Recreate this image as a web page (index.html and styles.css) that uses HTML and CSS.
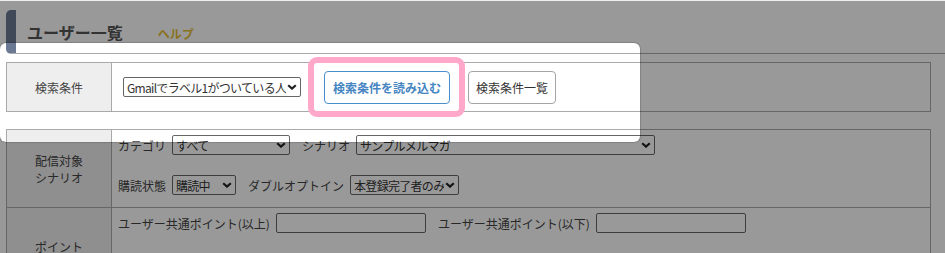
FILE: index.html
```html
<!DOCTYPE html>
<html lang="ja">
<head>
  <meta charset="utf-8"/>
  <title>ユーザー一覧</title>
  <link rel="stylesheet" href="styles.css">
</head>
<body>
  <div class="page">

    <div class="page-head">
      <h1 class="page-title">ユーザー一覧</h1>
      <a class="help-link" href="#">ヘルプ</a>
    </div>

    <!-- search condition -->
    <table class="form-table search-table">
      <tr>
        <th>検索条件</th>
        <td>
          <div class="line">
            <span class="sel">
              <select class="w-cond">
                <option>Gmailでラベル1がついている人</option>
              </select>
              <svg class="chev" viewBox="0 0 10 6" width="10" height="6"><path d="M1.2 1.2 5 4.6 8.8 1.2" fill="none" stroke="currentColor" stroke-width="2.2"/></svg>
            </span>
            <button class="btn btn-load">検索条件を読み込む</button>
            <button class="btn btn-list">検索条件一覧</button>
          </div>
        </td>
      </tr>
    </table>

    <table class="form-table filter-table">
      <tr class="row-scenario">
        <th>配信対象<br>シナリオ</th>
        <td>
          <div class="line">
            <span class="lbl">カテゴリ</span>
            <span class="sel">
              <select class="w-cat"><option>すべて</option></select>
              <svg class="chev" viewBox="0 0 10 6" width="10" height="6"><path d="M1.2 1.2 5 4.6 8.8 1.2" fill="none" stroke="currentColor" stroke-width="2.2"/></svg>
            </span>
            <span class="lbl gap-l">シナリオ</span>
            <span class="sel">
              <select class="w-scn"><option>サンプルメルマガ</option></select>
              <svg class="chev" viewBox="0 0 10 6" width="10" height="6"><path d="M1.2 1.2 5 4.6 8.8 1.2" fill="none" stroke="currentColor" stroke-width="2.2"/></svg>
            </span>
          </div>
          <div class="line">
            <span class="lbl">購読状態</span>
            <span class="sel">
              <select class="w-sub"><option>購読中</option></select>
              <svg class="chev" viewBox="0 0 10 6" width="10" height="6"><path d="M1.2 1.2 5 4.6 8.8 1.2" fill="none" stroke="currentColor" stroke-width="2.2"/></svg>
            </span>
            <span class="lbl gap-l">ダブルオプトイン</span>
            <span class="sel">
              <select class="w-opt"><option>本登録完了者のみ</option></select>
              <svg class="chev" viewBox="0 0 10 6" width="10" height="6"><path d="M1.2 1.2 5 4.6 8.8 1.2" fill="none" stroke="currentColor" stroke-width="2.2"/></svg>
            </span>
          </div>
        </td>
      </tr>
      <tr class="row-point">
        <th>ポイント</th>
        <td>
          <div class="line">
            <span class="lbl">ユーザー共通ポイント(以上)</span>
            <input type="text" class="txt">
            <span class="lbl gap-l">ユーザー共通ポイント(以下)</span>
            <input type="text" class="txt">
          </div>
        </td>
      </tr>
    </table>
  </div>

  <!-- tutorial highlight -->
  <div class="spotlight"></div>
  <div class="focus-ring"></div>
</body>
</html>
```

FILE: styles.css
```css
body {
  margin: 0;
  font-family: "Noto Sans CJK JP", "Liberation Sans", sans-serif;
  font-size: 12px;
  color: #444;
  background-color: #fff;
  position: relative;
  overflow: hidden;
  border-top: 1px solid #eee;
}

.page {
  padding: 9px 0 0 6px;
}

.page-head {
  display: flex;
  align-items: center;
  height: 43px;
  border-left: 10px solid #6b7a92;
  border-bottom: 1px solid #aaa;
  border-radius: 5px 0 0 5px;
  padding-left: 11px;
}

.page-title {
  margin: 0;
  font-size: 16px;
  font-weight: 700;
  color: #555;
  line-height: 1;
}

.help-link {
  margin: 3px 0 0 35px;
  font-size: 12px;
  font-weight: 700;
  color: #e6be36;
  text-decoration: none;
}

.form-table {
  width: 925px;
  border-collapse: collapse;
  border: 1px solid #aaa;
}

.form-table th,
.form-table td {
  border: 1px solid #aaa;
  padding: 0;
}

.form-table th {
  width: 104px;
  background-color: #eee;
  font-weight: 400;
  line-height: 17px;
  text-align: center;
}

.search-table {
  margin-top: 8px;
}

.search-table td {
  height: 48px;
  padding: 0 11px;
}

.filter-table {
  margin-top: 17px;
}

.row-scenario td {
  padding: 5px 6px 12px;
  vertical-align: top;
}

.row-scenario .line + .line {
  margin-top: 20px;
}

.row-point td {
  height: 66px;
  padding: 5px 6px;
  vertical-align: top;
}

.line {
  display: flex;
  align-items: center;
  gap: 6px;
  height: 20px;
}

.lbl {
  white-space: nowrap;
}

.gap-l {
  margin-left: 6px;
}

.sel {
  position: relative;
  display: inline-block;
  height: 20px;
}

.sel select {
  appearance: none;
  -webkit-appearance: none;
  height: 20px;
  margin: 0;
  padding: 0 14px 0 3px;
  border: 1px solid #666;
  border-radius: 2px;
  background-color: #fff;
  font-family: inherit;
  font-size: 12px;
  letter-spacing: -0.7px;
  color: #333;
  box-sizing: border-box;
}

.chev {
  position: absolute;
  right: 4px;
  top: 7px;
  color: #222;
  pointer-events: none;
}

.w-cond { width: 178px; }
.w-cat { width: 118px; }
.w-scn { width: 299px; }
.w-sub { width: 64px; }
.w-opt { width: 109px; }

.txt {
  width: 150px;
  height: 20px;
  margin: 0;
  padding: 0 4px;
  border: 1px solid #666;
  border-radius: 2px;
  box-sizing: border-box;
}

.btn {
  height: 33px;
  background-color: #fff;
  border-radius: 4px;
  font-family: inherit;
  font-size: 12px;
  cursor: pointer;
}

.btn-load {
  margin-left: 17px;
  padding: 0 8px;
  border: 1px solid #4a8fcb;
  color: #4585c2;
  font-weight: 700;
}

.btn-list {
  margin-left: 12px;
  padding: 0 7px;
  border: 1px solid #a5a5a5;
  color: #333;
}

/* tutorial overlay */
.spotlight {
  position: absolute;
  left: 0;
  top: 42px;
  width: 640px;
  height: 99px;
  border-radius: 6px;
  box-shadow: 0 0 1px 1px rgba(0, 0, 0, 0.15), 0 0 0 3000px rgba(0, 0, 0, 0.4);
  pointer-events: none;
}

.focus-ring {
  position: absolute;
  left: 308px;
  top: 56px;
  width: 157px;
  height: 60px;
  border: 6px solid #ffa8c9;
  border-radius: 9px;
  box-sizing: border-box;
  pointer-events: none;
}
```
